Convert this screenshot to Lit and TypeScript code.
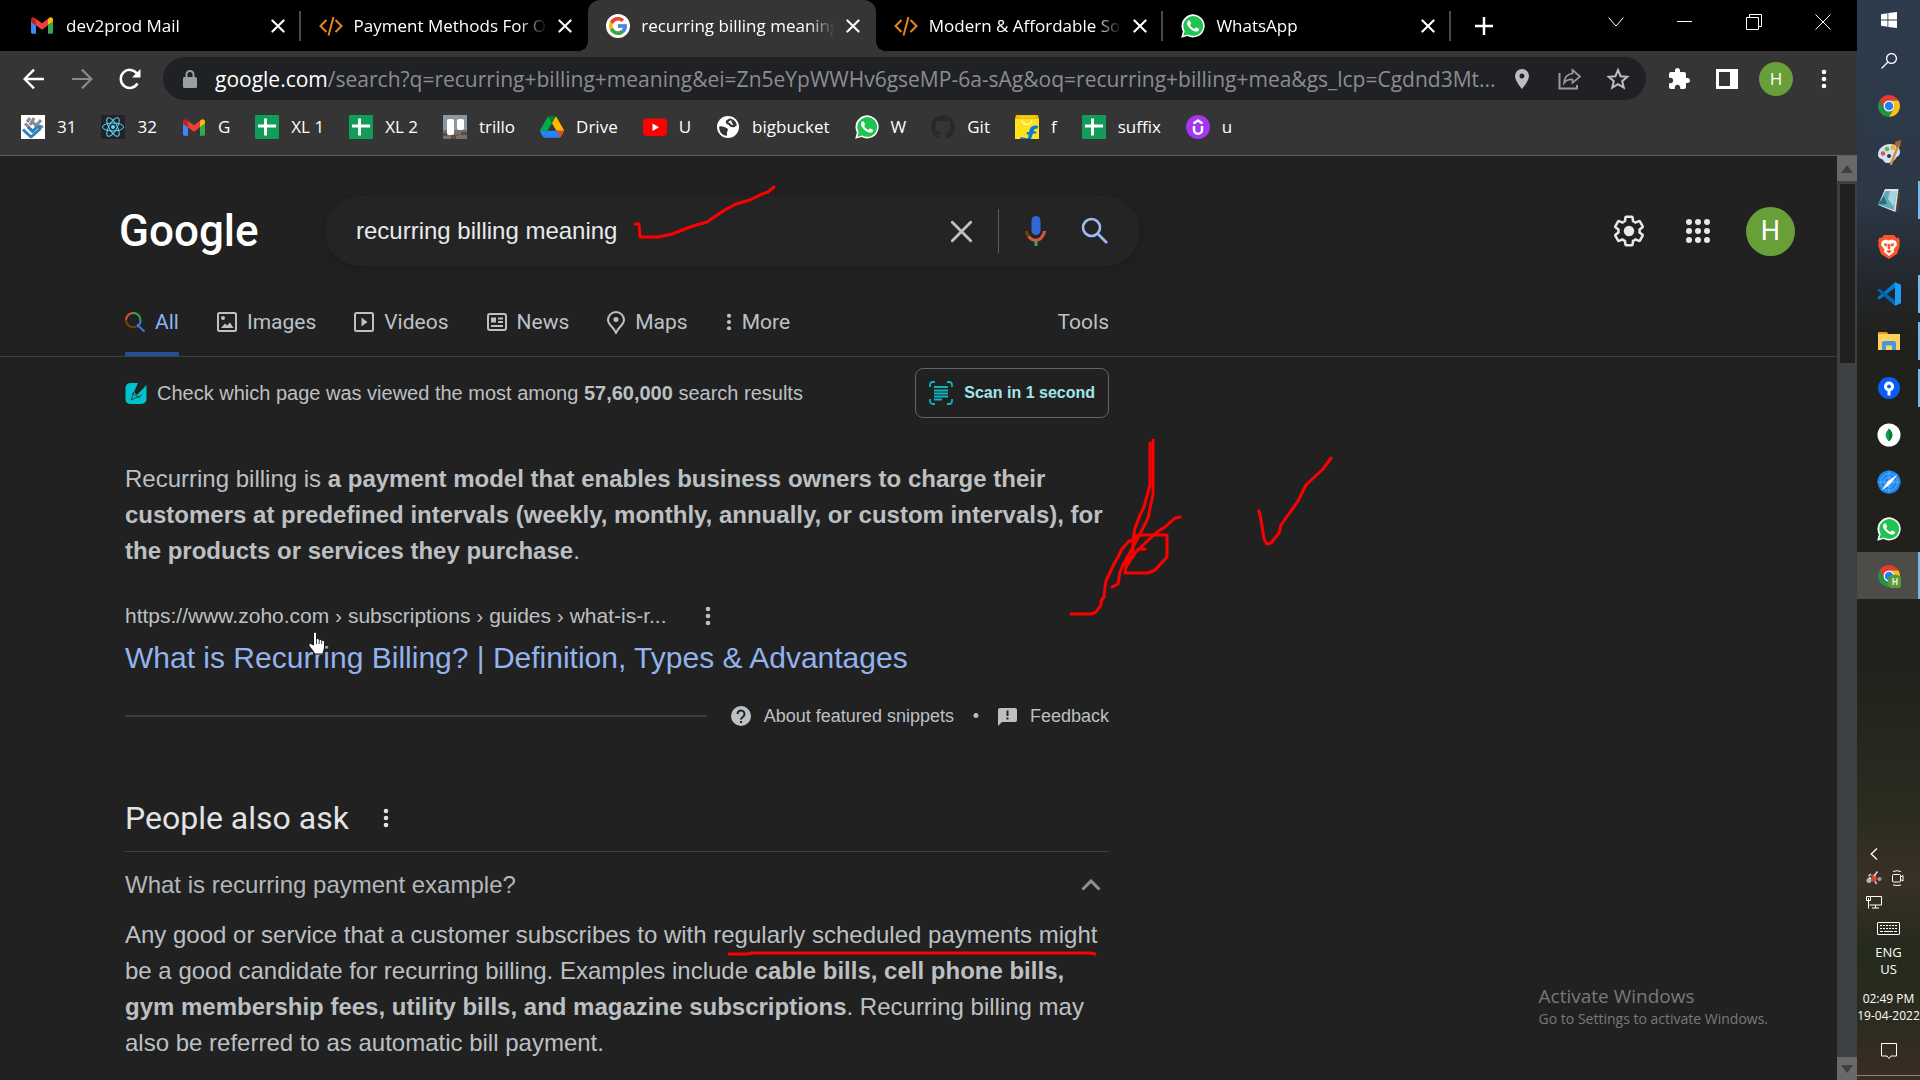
import { LitElement, html, svg, css, nothing, TemplateResult } from "lit";
import { customElement, state } from "lit/decorators.js";

type Art = TemplateResult;

const icon = (box: string, w: number, h: number, body: unknown): Art =>
  html`<svg viewBox=${box} width=${w} height=${h} aria-hidden="true">${body}</svg>`;

const gmail = () => icon("52 38 88 74", 22, 21, svg`
  <path fill="#4285f4" d="M58 108h14V74L52 59v43c0 3.32 2.69 6 6 6"/>
  <path fill="#34a853" d="M120 108h14c3.32 0 6-2.69 6-6V59l-20 15"/>
  <path fill="#fbbc04" d="M120 48v26l20-15v-8c0-7.42-8.47-11.65-14.4-7.2"/>
  <path fill="#ea4335" d="M72 74V48l24 18 24-18v26L96 92"/>
  <path fill="#c5221f" d="M52 51v8l20 15V48l-5.6-4.2c-5.94-4.45-14.4-.22-14.4 7.2"/>`);

const codeMark = () => icon("0 0 24 24", 24, 24, svg`
  <g fill="none" stroke="#e8871e" stroke-width="2"><path d="M7.500 6 1.500 12l6 6M16.500 6l6 6-6 6M14.500 3 9.500 21.500"/></g>`);

const googleG = () => icon("0 0 48 48", 24, 24, svg`
  <circle cx="24" cy="24" r="24" fill="#fff"/>
  <g transform="translate(2.400 2.400) scale(.9)">
  <path fill="#fbbc05" d="M43.611,20.083H42V20H24v8h11.303c-1.649,4.657-6.08,8-11.303,8c-6.627,0-12-5.373-12-12s5.373-12,12-12c3.059,0,5.842,1.154,7.961,3.039l5.657-5.657C34.046,6.053,29.268,4,24,4C12.955,4,4,12.955,4,24s8.955,20,20,20s20-8.955,20-20C44,22.659,43.862,21.35,43.611,20.083z"/>
  <path fill="#ea4335" d="M6.306,14.691l6.571,4.819C14.655,15.108,18.961,12,24,12c3.059,0,5.842,1.154,7.961,3.039l5.657-5.657C34.046,6.053,29.268,4,24,4C16.318,4,9.656,8.337,6.306,14.691z"/>
  <path fill="#34a853" d="M24,44c5.166,0,9.86-1.977,13.409-5.192l-6.19-5.238C29.211,35.091,26.715,36,24,36c-5.202,0-9.619-3.317-11.283-7.946l-6.522,5.025C9.505,39.556,16.227,44,24,44z"/>
  <path fill="#4285f4" d="M43.611,20.083H42V20H24v8h11.303c-0.792,2.237-2.231,4.166-4.087,5.571l6.19,5.238C36.971,39.205,44,34,44,24C44,22.659,43.862,21.35,43.611,20.083z"/></g>`);

const whatsapp = () => icon("0 0 24 24", 24, 24, svg`
  <path fill="#fff" d="M.2 23.8 1.900 17.500A11.600 11.600 0 1 1 6.500 22.100Z"/>
  <path fill="#20c352" d="M2.300 21.700 3.700 17A9.900 9.900 0 1 1 7.200 20.500Z"/>
  <path fill="#fff" d="M17.472 14.382c-.297-.149-1.758-.867-2.03-.967-.273-.099-.471-.148-.67.15-.197.297-.767.966-.94 1.164-.173.199-.347.223-.644.075-.297-.15-1.255-.463-2.39-1.475-.883-.788-1.48-1.761-1.653-2.059-.173-.297-.018-.458.13-.606.134-.133.298-.347.446-.52.149-.174.198-.298.298-.497.099-.198.05-.371-.025-.52-.075-.149-.669-1.612-.916-2.207-.242-.579-.487-.5-.669-.51-.173-.008-.371-.01-.57-.01-.198 0-.52.074-.792.372-.272.297-1.04 1.016-1.04 2.479 0 1.462 1.065 2.875 1.213 3.074.149.198 2.096 3.2 5.077 4.487.709.306 1.262.489 1.694.625.712.227 1.36.195 1.871.118.571-.085 1.758-.719 2.006-1.413.248-.694.248-1.289.173-1.413-.074-.124-.272-.198-.57-.347z"/>`);

const sheet = () => icon("0 0 24 24", 24, 24, svg`
  <rect width="24" height="24" rx="1" fill="#0f9d58"/><path fill="#fff" d="M9 3.500h3v17H9zM3 9.500h18v3H3z"/>`);

const handLogo = () => icon("0 0 24 24", 24, 24, svg`
  <rect width="24" height="24" fill="#fff"/>
  <path fill="none" stroke="#8a8c8f" stroke-width="3" d="M4 8.500 11 15.500M9 3l-3 4M9 10l4-7M14 12l6-7M11 7l8 6 3-2"/>
  <path fill="none" stroke="#2f7fb8" stroke-width="3" stroke-linejoin="round" d="M2 14.500 10 22 18.500 14.500V10M7 12l4.500 4.500 5-5"/>`);

const reactLogo = () => icon("0 0 24 24", 24, 24, svg`
  <rect width="24" height="24" rx="1" fill="#20232a"/>
  <g fill="none" stroke="#61dafb" stroke-width="1"><ellipse cx="12" cy="12" rx="10.500" ry="4"/>
  <ellipse cx="12" cy="12" rx="10.500" ry="4" transform="rotate(60 12 12)"/>
  <ellipse cx="12" cy="12" rx="10.500" ry="4" transform="rotate(120 12 12)"/></g><circle cx="12" cy="12" r="2" fill="#61dafb"/>`);

const trello = () => icon("0 0 24 24", 24, 24, svg`
  <rect width="24" height="24" fill="#8b97a1"/><rect y="15" width="24" height="9" fill="#74706d"/>
  <path fill="#5d4a44" d="M0 18h4v3H0zM8 20h5v4H8zM18 17h6v3h-6z"/><path fill="#a8433c" d="M13 19h3v2h-3z"/>
  <rect x="4" y="4" width="7" height="16" rx="2" fill="#fff"/><rect x="14" y="4" width="7" height="11" rx="2" fill="#fff"/>`);

const drive = () => icon("0 0 87.3 78", 24, 22, svg`
  <path fill="#2684fc" d="m6.600 66.850 3.850 6.650c.8 1.400 1.950 2.500 3.300 3.300l13.750-23.800h-27.500c0 1.550.4 3.100 1.200 4.500z"/>
  <path fill="#00ac47" d="m43.650 25-13.750-23.800c-1.350.8-2.500 1.900-3.300 3.300l-25.400 44a9.060 9.060 0 0 0 -1.200 4.500h27.500z"/>
  <path fill="#ea4335" d="m73.550 76.800c1.350-.8 2.500-1.900 3.300-3.300l1.600-2.750 7.650-13.250c.8-1.400 1.200-2.950 1.200-4.500h-27.502l5.852 11.500z"/>
  <path fill="#00832d" d="m43.650 25 13.750-23.800c-1.350-.8-2.900-1.200-4.500-1.200h-18.500c-1.600 0-3.150.45-4.500 1.200z"/>
  <path fill="#2684fc" d="m59.800 53h-32.300l-13.750 23.800c1.350.8 2.900 1.200 4.500 1.200h50.800c1.600 0 3.150-.45 4.500-1.200z"/>
  <path fill="#ffba00" d="m73.400 26.500-12.700-22c-.8-1.400-1.950-2.500-3.300-3.300l-13.750 23.800 16.150 28h27.450c0-1.550-.4-3.100-1.200-4.500z"/>`);

const youtube = () => icon("0 0 24 24", 24, 24, svg`
  <rect y="3.500" width="24" height="17.500" rx="4" fill="#f00"/><path fill="#fff" d="M9.500 8.500v7.500l6.500-3.800z"/>`);

const globe = () => icon("0 0 24 24", 24, 24, svg`
  <circle cx="12" cy="12" r="11" fill="#fff"/>
  <path fill="#353535" d="M3.200 11.500c2.500-.8 4.500.3 7 1.300 2 .8 2.200 2.800.9 4l-.2 4C5.800 20.500 2.900 16.500 3.200 11.500z"/>
  <path fill="none" stroke="#353535" stroke-width="2.300" stroke-linecap="round" d="M14 4.500c-1 1-3.500 1-3 3 .3 1.300 2.200.7 3 2.200.8 1.600 2.700 1.500 4.200 1.300"/>
  <path fill="#353535" d="M14.500 3.500c3.500.8 6 3.500 6.300 7.300l-2.300.4-2.500-3.200z"/>`);

const github = () => icon("0 0 24 24", 24, 24, svg`
  <path fill="#24292e" d="M12 .297c-6.63 0-12 5.373-12 12 0 5.303 3.438 9.800 8.205 11.385.6.113.82-.258.82-.577 0-.285-.01-1.040-.015-2.040-3.338.724-4.042-1.610-4.042-1.610C4.422 18.070 3.633 17.700 3.633 17.700c-1.087-.744.084-.729.084-.729 1.205.084 1.838 1.236 1.838 1.236 1.070 1.835 2.809 1.305 3.495.998.108-.776.417-1.305.76-1.605-2.665-.3-5.466-1.332-5.466-5.930 0-1.310.465-2.380 1.235-3.220-.135-.303-.54-1.523.105-3.176 0 0 1.005-.322 3.300 1.230.96-.267 1.980-.399 3-.405 1.020.006 2.040.138 3 .405 2.280-1.552 3.285-1.230 3.285-1.230.645 1.653.24 2.873.12 3.176.765.84 1.230 1.910 1.230 3.220 0 4.610-2.805 5.625-5.475 5.920.42.36.81 1.096.81 2.220 0 1.606-.015 2.896-.015 3.286 0 .315.21.69.825.57C20.565 22.092 24 17.592 24 12.297c0-6.627-5.373-12-12-12"/>`);

const flipkart = () => icon("0 0 24 24", 24, 24, svg`
  <path fill="#ffe11b" d="M0 4h24v20H0z"/><path fill="#f5b800" d="M1 0h22l1 4H0z"/><path fill="#ffe11b" d="M4 1.500h16v1H4z"/>
  <path fill="none" stroke="#fff6b0" stroke-width="1.500" d="M7 5c0 6 10 6 10 0"/>
  <path fill="#047bd5" d="M23 11c-5-1.500-8 1-8.600 4.500l-.2 1.500H12l-.5 2.500h2.200L13 23c-2.500.8-5-1.500-7.500-.5L5 24h11l2-5.500h3l.5-2h-2.800c.3-2.300 1.300-3.200 4-3z"/>`);

const udemy = () => icon("0 0 24 24", 24, 24, svg`
  <circle cx="12" cy="12" r="12" fill="#a435f0"/>
  <path fill="none" stroke="#fff" stroke-width="2.500" d="M8 11v4a4 3.800 0 0 0 8 0v-4M7.500 8.500 12 5.500l4.500 3"/>`);

const chromeLogo = (badge = false) => icon("0 0 48 48", 24, 24, svg`
  <path fill="#e33b2e" d="M4.950 13A22 22 0 0 1 43.050 13H24A11 11 0 0 0 14.470 29.500Z"/>
  <path fill="#229342" d="M4.950 13 14.470 29.500A11 11 0 0 0 33.530 29.500L24 46A22 22 0 0 1 4.950 13Z"/>
  <path fill="#fbc116" d="M43.050 13A22 22 0 0 1 24 46L33.530 29.500A11 11 0 0 0 24 13Z"/>
  <circle cx="24" cy="24" r="11" fill="#fff"/><circle cx="24" cy="24" r="8.500" fill="#2a7de9"/>
  ${badge ? svg`<circle cx="36" cy="36" r="15" fill="#5c9a36"/>
    <text x="36" y="42" text-anchor="middle" font-family="Roboto, sans-serif" font-size="17" font-weight="700" fill="#e9f3e1">H</text>` : nothing}`);

const paint = () => icon("0 0 26 26", 26, 26, svg`
  <path fill="#cfe3f2" d="M2 15C2 8 8 4 14 4c6 0 10 3 10 8 0 4-2.500 4-4 6-1.500 2.500-4 5-9 5-3 0-3-3-5.500-4C3.500 18.500 2 17 2 15z"/>
  <circle cx="7" cy="13.500" r="2.300" fill="#e0564b"/><circle cx="11" cy="9" r="2.300" fill="#67b546"/><circle cx="17" cy="7.500" r="2.500" fill="#f0b12c"/>
  <circle cx="13" cy="16" r="2" fill="#2c3744"/><path stroke="#d98a3a" stroke-width="2.400" stroke-linecap="round" d="M22 6 15 24"/>
  <path fill="#a5683a" d="m19 2 6-2-1 7-4 0z"/>`);

const notepad = () => icon("0 0 26 26", 26, 26, svg`
  <path fill="#4d4335" d="m21 4 3 1-1 18-3 2z"/><path fill="#dbe7ec" d="M9 2h13.500L19.500 25 2 18z"/>
  <path fill="#5fabbd" d="M9.500 4H21l-3 19L2 17.500z"/><path fill="#2f6c80" d="m8 9 3 8-9 .5z"/><path fill="#a8d5dd" d="M14 4h7l-3 16-6-8z"/>`);

const brave = () => icon("0 0 24 24", 24, 24, svg`
  <path fill="#fb542b" d="M7 0h10l2.500 3 2-.5L23 6l-.8 2c1 1 .5 3-.2 5l-2 6-8 5-8-5-2-6c-.7-2-1.200-4-.2-5L1 6l1.500-3.500 2 .5z"/>
  <path fill="#fff" d="m5 6 4.500-1.500 2.500 1 2.500-1L19 6l1 4-3.500 4.500.5 2.500-5 4-5-4 .5-2.500L4 10z"/>
  <path fill="#fb542b" d="m7 8 3.500 1-.5 2.500L7.500 11zM17 8l-3.500 1 .5 2.500 2.500-.5zM11 9h2l.5 4.500L12 14.500l-1.500-1zM9 16l3-1 3 1-3 2.500z"/>`);

const vscode = () => icon("0 0 24 24", 24, 24, svg`
  <path fill="#007acc" d="m.3 15.800 2 1.800L18 5.800V0z"/>
  <path fill="#0065a9" d="m.3 8.200 2-1.800L18 18.200V24z"/><path fill="#1f9cf0" d="M17.500 0 24 2.800v18.400L17.500 24c.5 0 .5-.4.500-1V1c0-.6 0-1-.5-1z"/>`);

const explorer = () => icon("0 0 24 24", 24, 24, svg`
  <path fill="#e29b0f" d="M1 3h9l1.500 2.500H1z"/><path fill="#ffd15c" d="M1 5h22v16H1z"/>
  <path fill="#3f9ae0" d="M5 13.500 6.500 12h11l1.500 1.500V21h-4v-4.500H9V21H5z"/>`);

const sourcetree = () => icon("0 0 24 24", 24, 24, svg`
  <circle cx="12" cy="12" r="11" fill="#0a5cf5"/><circle cx="12" cy="10.500" r="3.500" fill="none" stroke="#fff" stroke-width="3"/><path fill="#fff" d="M10.500 13h3v6.500h-3z"/>`);

const mongo = () => icon("0 0 24 24", 24, 24, svg`
  <circle cx="12" cy="12" r="11.500" fill="#fff"/><path fill="#10a14c" d="M12 5.500c4.500 4.500 4.500 8.500 0 13-4.500-4.500-4.500-8.500 0-13z"/><path fill="#0b7c3a" d="M12 5.500c4.500 4.500 4.500 8.500 0 13z"/>`);

const compass = () => icon("0 0 24 24", 24, 24, svg`
  <circle cx="12" cy="12" r="11.500" fill="#1c87f0"/><g fill="none" stroke="#6db5f8" stroke-width=".8"><circle cx="12" cy="12" r="8.500"/><circle cx="12" cy="12" r="5"/><path d="M12 .5v23M.5 12h23"/></g>
  <path fill="#fff" d="M20.500 4.500 13.500 14 4.500 20.500 11 11z"/>`);

const dots = (h = 20) => icon("0 0 6 20", 6, h, svg`
  <g fill="currentColor"><circle cx="3" cy="3" r="2.300"/><circle cx="3" cy="10" r="2.300"/><circle cx="3" cy="17" r="2.300"/></g>`);

const closeX = (s: number, w: number) => icon("0 0 20 20", s, s, svg`
  <path stroke="currentColor" stroke-width=${w} stroke-linecap="round" d="M2 2 18 18M18 2 2 18"/>`);

const lens = () => icon("0 0 28 28", 28, 28, svg`
  <g fill="none" stroke="currentColor" stroke-width="2.600"><circle cx="10.500" cy="10.500" r="8.500"/><path d="m17 17 9 9"/></g>`);

interface Tab { title: string; art: () => Art; active?: boolean; line?: boolean; }
const TABS: Tab[] = [
  { title: "dev2prod Mail", art: gmail, line: true },
  { title: "Payment Methods For Online", art: codeMark },
  { title: "recurring billing meaning", art: googleG, active: true },
  { title: "Modern & Affordable Software", art: codeMark, line: true },
  { title: "WhatsApp", art: whatsapp, line: true },
];

const BOOKMARKS: [string, () => Art][] = [
  ["31", handLogo], ["32", reactLogo], ["G", gmail], ["XL 1", sheet], ["XL 2", sheet],
  ["trillo", trello], ["Drive", drive], ["U", youtube], ["bigbucket", globe], ["W", whatsapp],
  ["Git", github], ["f", flipkart], ["suffix", sheet], ["u", udemy],
];

const APPS: [string, () => Art, boolean][] = [
  ["Chrome", chromeLogo, false], ["Paint", paint, false], ["Notepad", notepad, true],
  ["Brave", brave, false], ["Code", vscode, true], ["Explorer", explorer, true],
  ["Sourcetree", sourcetree, true], ["MongoDB", mongo, false], ["Navigator", compass, false],
  ["WhatsApp", whatsapp, false],
];

@customElement("browser-tabs")
class BrowserTabs extends LitElement {
  static styles = css`
    :host { display: flex; height: 51px; background: #000; color: #fff; font: 17px/24px "Open Sans", "Noto Sans", sans-serif; }
    svg { display: block; flex: none; }
    button { all: unset; display: flex; align-items: center; justify-content: center; box-sizing: border-box; cursor: pointer; }
    .tabs { display: flex; flex: 0 1 1451px; min-width: 0; padding-left: 13px; box-sizing: border-box; }
    .tab { position: relative; display: flex; flex: 1 1 0; min-width: 0; align-items: center; padding: 0 13px 0 18px; box-sizing: border-box; }
    .line { background: linear-gradient(#4a4a4a, #4a4a4a) right center / 2px 30px no-repeat; }
    .active { background: #353535; border-radius: 12px 12px 0 0; }
    .active::before, .active::after { content: ""; position: absolute; bottom: 0; width: 10px; height: 10px; }
    .active::before { left: -10px; background: radial-gradient(circle at 0 0, #000 10px, #353535 10px); }
    .active::after { right: -10px; background: radial-gradient(circle at 100% 0, #000 10px, #353535 10px); }
    .fav { width: 24px; flex: none; }
    .name { flex: 1; min-width: 0; justify-content: flex-start; margin: 0 8px 0 11px; overflow: hidden; white-space: nowrap;
      mask-image: linear-gradient(90deg, #000 calc(100% - 28px), transparent); }
    .close { width: 20px; height: 24px; }
    .plus { width: 66px; }
    .controls { display: flex; margin-left: auto; height: 43px; }
    .controls button { width: 69px; }
  `;
  render() {
    return html`
      <div class="tabs">
        ${TABS.map((t) => html`<div class="tab ${t.active ? "active" : t.line ? "line" : ""}">
          <span class="fav">${t.art()}</span>
          <button class="name">${t.title}</button>
          <button class="close" aria-label="Close tab">${closeX(14, 3)}</button>
        </div>`)}
      </div>
      <button class="plus" aria-label="New tab">${icon("0 0 18 18", 18, 18, svg`<path stroke="#fff" stroke-width="2.500" d="M9 0v18M0 9h18"/>`)}</button>
      <div class="controls">
        <button aria-label="Search tabs">${icon("0 0 16 10", 16, 10, svg`<path fill="none" stroke="#fff" d="m.5.5 7.500 8.500 7.500-8.500"/>`)}</button>
        <button aria-label="Minimize">${icon("0 0 15 15", 15, 15, svg`<path stroke="#fff" d="M0 7.500h15"/>`)}</button>
        <button aria-label="Restore">${icon("0 0 16 16", 16, 16, svg`<path fill="none" stroke="#fff" d="M.5 3.500h12v12H.5zM3.500 3.500V.5h12v12h-3"/>`)}</button>
        <button aria-label="Close">${icon("0 0 16 16", 16, 16, svg`<path stroke="#fff" d="m.5.5 15 15M15.500.5l-15 15"/>`)}</button>
      </div>`;
  }
}

@customElement("browser-toolbar")
class BrowserToolbar extends LitElement {
  static styles = css`
    :host { display: block; background: #353535; color: #fff; border-bottom: 1px solid #5f6062; font-family: "Open Sans", "Noto Sans", sans-serif; }
    svg { display: block; flex: none; }
    button { all: unset; display: flex; align-items: center; justify-content: center; cursor: pointer; }
    .bar { display: flex; align-items: center; height: 43px; padding: 6px 9px 0 10px; }
    .nav { width: 48px; height: 40px; }
    .dim { color: #8a8a8a; }
    .pill { display: flex; flex: 1; min-width: 0; align-items: center; align-self: stretch; margin: 0 9px; padding: 0 4px 0 20px; border-radius: 22px; background: #202124; font-size: 21px; }
    .host { margin-left: 18px; }
    .url { flex: 1; min-width: 0; padding: 0; border: 0; outline: 0; background: none; color: #8b8d90; font: inherit; text-overflow: ellipsis; }
    .pill button { width: 48px; height: 40px; color: #bdc1c6; }
    .ext { width: 48px; height: 40px; }
    .me { width: 34px; height: 34px; margin: 0 7px 0 8px; border-radius: 50%; background: #689f38; font-size: 17px; }
    .marks { display: flex; align-items: center; height: 54px; padding: 0 0 1px 21px; gap: 25px; }
    .mark { display: flex; align-items: center; gap: 12px; color: #fff; text-decoration: none; font-size: 17px; line-height: 24px; white-space: nowrap; }
    .pic { width: 24px; display: flex; justify-content: center; }
  `;
  render() {
    return html`
      <div class="bar">
        <button class="nav" aria-label="Back">${icon("0 0 20 20", 22, 22, svg`<path fill="none" stroke="#fff" stroke-width="2.200" d="M19 10H2M10 1.500 1.500 10l8.500 8.500"/>`)}</button>
        <button class="nav dim" aria-label="Forward">${icon("0 0 20 20", 22, 22, svg`<path fill="none" stroke="currentColor" stroke-width="2" d="M1 10h17M10 1.500l8.500 8.500-8.500 8.500"/>`)}</button>
        <button class="nav" aria-label="Reload">${icon("0 0 22 22", 22, 22, svg`<path fill="none" stroke="#fff" stroke-width="2.500" d="M18.500 15.500A9 9 0 1 1 18 5.500"/><path fill="#fff" d="M21.500 1v8.500H13z"/>`)}</button>
        <div class="pill">
          ${icon("0 0 14 18", 14, 18, svg`<rect y="7" width="14" height="11" rx="1.500" fill="#9aa0a6"/><path fill="none" stroke="#9aa0a6" stroke-width="2" d="M3.500 8V4.500a3.500 3.500 0 0 1 7 0V8"/>`)}
          <label class="host" for="url">google.com</label>
          <input class="url" id="url" .value=${"/search?q=recurring+billing+meaning&ei=Zn5eYpWWHv6gseMP-6a-sAg&oq=recurring+billing+mea&gs_lcp=Cgdnd3Mt..."} />
          <button aria-label="Location">${icon("0 0 14 20", 14, 20, svg`<path fill="#bdbdbd" fill-rule="evenodd" d="M7 0a7 7 0 0 1 7 7c0 5-7 13-7 13S0 12 0 7a7 7 0 0 1 7-7zm0 4.500a2.500 2.500 0 1 0 0 5 2.500 2.500 0 0 0 0-5z"/>`)}</button>
          <button aria-label="Share">${icon("0 0 24 22", 24, 22, svg`<g fill="none" stroke="#9a9a9a" stroke-width="2"><path d="M1.500 5v15.500H19V17"/><path stroke-width="1.700" d="M14.500 2 22 8.500 14.500 15v-3.500c-4-.3-6.500 1-8.500 3.500 .5-5.500 3.500-9 8.500-9.500z"/></g>`)}</button>
          <button aria-label="Bookmark">${icon("0 0 24 24", 24, 24, svg`<path fill="none" stroke="#bdbdbd" stroke-width="2" d="m12 3 2.600 6.200 6.700.6-5.100 4.400 1.600 6.500L12 17.200l-5.800 3.500 1.600-6.500-5.100-4.400 6.700-.6z"/>`)}</button>
        </div>
        <button class="ext" aria-label="Extensions">${icon("0 0 24 24", 24, 24, svg`<path fill="#fff" d="M20.500 11H19V7c0-1.100-.9-2-2-2h-4V3.500C13 2.120 11.880 1 10.500 1S8 2.120 8 3.500V5H4c-1.100 0-1.990.9-1.990 2v3.800H3.500c1.490 0 2.700 1.210 2.700 2.700s-1.210 2.700-2.700 2.700H2V20c0 1.100.9 2 2 2h3.800v-1.500c0-1.490 1.210-2.700 2.700-2.700 1.490 0 2.700 1.210 2.700 2.700V22H17c1.100 0 2-.9 2-2v-4h1.500c1.380 0 2.500-1.120 2.500-2.500S21.880 11 20.500 11z"/>`)}</button>
        <button class="ext" aria-label="Side panel">${icon("0 0 22 22", 22, 22, svg`<path fill="#fff" fill-rule="evenodd" d="M0 1h22v20H0zM3 4v14h11V4z"/>`)}</button>
        <button class="me" aria-label="Profile">H</button>
        <button class="ext" aria-label="Menu">${dots(20)}</button>
      </div>
      <nav class="marks">
        ${BOOKMARKS.map(([name, art]) => html`<a class="mark" href="#"><span class="pic">${art()}</span>${name}</a>`)}
      </nav>`;
  }
}

@customElement("search-page")
class SearchPage extends LitElement {
  @state() open = true;
  static styles = css`
    :host { display: flex; flex: 1; background: #212121; color: #bdc0c3; font-family: "Liberation Sans", Arial, sans-serif; }
    svg { display: block; flex: none; }
    button { all: unset; display: flex; align-items: center; justify-content: center; box-sizing: border-box; cursor: pointer; }
    a { color: inherit; text-decoration: none; }
    h2, h3, p { margin: 0; font-weight: 400; }
    .page { flex: 1; min-width: 0; display: flex; flex-direction: column; }
    .head { display: flex; align-items: center; padding: 40px 42px 0 119px; }
    .logo { width: 206px; color: #fff; font: 500 44px/70px Roboto, "Liberation Sans", sans-serif; }
    .box { display: flex; flex: 0 1 815px; min-width: 0; box-sizing: border-box; align-items: center; height: 70px; padding: 0 23px 0 31px; border-radius: 35px; background: #242424; box-shadow: 0 2px 8px #1b1b1b; }
    .q { flex: 1; min-width: 0; height: 36px; padding: 0; border: 0; outline: 0; background: none; color: #e8eaed; font: 24px/36px "Liberation Sans", Arial, sans-serif; }
    .clear { width: 74px; height: 44px; border-right: 1px solid #5c5f62; color: #bdc1c6; }
    .mic { width: 74px; height: 44px; }
    .go { width: 44px; height: 44px; color: #9dbbf3; }
    .account { display: flex; align-items: center; margin-left: auto; gap: 36px; color: #e8e8e8; }
    .apps { padding-left: 4px; }
    .me { width: 49px; height: 49px; border-radius: 50%; background: #689f38; color: #fff; font: 27px/49px Roboto, sans-serif; }
    .filters { display: flex; padding: 32px 0 0 125px; border-bottom: 1px solid #3c3e40; font: 21px/48px Roboto, "Liberation Sans", sans-serif; color: #bdc1c6; }
    .set { display: flex; flex: 0 1 984px; gap: 38px; }
    .filter { display: flex; align-items: center; gap: 10px; padding-bottom: 6px; border-bottom: 4px solid transparent; }
    .on { color: #8ab4f8; border-color: #264f94; }
    .tools { margin-left: auto; }
    .column { max-width: 984px; margin-left: 125px; display: flex; flex-direction: column; }
    .check { display: flex; align-items: center; gap: 10px; margin-top: 11px; font-size: 20px; line-height: 28px; white-space: nowrap; }
    .scan { gap: 11px; height: 50px; margin-left: auto; padding: 0 13px; border: 1px solid #5f6368; border-radius: 8px; color: #a2e6ea; font-size: 16px; font-weight: 700; }
    .text { font-size: 24px; line-height: 36px; }
    .snippet { margin-top: 43px; }
    .cite { display: flex; align-items: center; gap: 38px; margin-top: 33px; font-size: 21px; line-height: 28px; }
    .title { margin-top: 8px; font-size: 30px; line-height: 40px; color: #93b3ee; }
    .about { display: flex; align-items: center; margin-top: 24px; height: 28px; font-size: 18px; line-height: 28px; }
    .rule { flex: 1; height: 2px; margin-right: 24px; background: #3c3e40; }
    .note { display: flex; align-items: center; gap: 13px; }
    .sep { width: 44px; text-align: center; }
    .ask { display: flex; align-items: center; gap: 34px; margin-top: 68px; padding-bottom: 13px; border-bottom: 1px solid #3c3e40; color: #e2e3e5; }
    .ask h2 { font: 32px/40px Roboto, "Liberation Sans", sans-serif; }
    .question { justify-content: space-between; padding: 15px 8px 14px 0; color: #b4b7ba; }
    .scroll { display: flex; flex-direction: column; width: 20px; background: #3c4144; color: #3c4144; }
    .step { height: 25px; background: #696969; }
    .low { margin-top: auto; height: 23px; }
    .thumb { height: 179px; margin: 3px 2px 0 3px; background: #202020; }
  `;
  render() {
    const frame = svg`<rect x="1" y="1" width="18" height="18" rx="1.500" fill="none" stroke="currentColor" stroke-width="2"/>`;
    return html`
      <main class="page">
        <header class="head">
          <a class="logo" href="#">Google</a>
          <div class="box">
            <input class="q" aria-label="Search" .value=${"recurring billing meaning"} />
            <button class="clear" aria-label="Clear">${closeX(23, 2.5)}</button>
            <button class="mic" aria-label="Voice search">${icon("0 0 22 30", 22, 30, svg`
              <rect x="6.500" width="9" height="19" rx="4.500" fill="#3367d6"/><path fill="none" stroke="#d95442" stroke-width="3" d="M3.500 20.500c4 5 11 5 14-.5 1.500-2 2-3.500 2-5"/>
              <path fill="none" stroke="#6b4700" stroke-width="3" d="M1.500 15c0 2 .5 3.500 2 5.500"/><path fill="#34a853" d="M9.500 25h3v5h-3z"/>`)}</button>
            <button class="go" aria-label="Search">${lens()}</button>
          </div>
          <div class="account">
            <button aria-label="Settings">${icon("0 0 24 24", 34, 34, svg`
              <path fill="none" stroke="currentColor" stroke-width="1.800" d="M19.430 12.980c.04-.32.07-.64.07-.98 0-.34-.03-.66-.07-.98l2.110-1.650c.19-.15.24-.42.12-.64l-2-3.460c-.09-.16-.26-.25-.44-.25-.06 0-.12.01-.17.03l-2.490 1c-.52-.4-1.080-.73-1.690-.98l-.38-2.650C14.460 2.180 14.250 2 14 2h-4c-.25 0-.46.18-.49.42l-.38 2.650c-.61.25-1.170.59-1.690.98l-2.490-1c-.06-.02-.12-.03-.18-.03-.17 0-.34.09-.43.25l-2 3.460c-.13.22-.07.49.12.64l2.110 1.650c-.04.32-.07.65-.07.98 0 .33.03.66.07.98l-2.110 1.650c-.19.15-.24.42-.12.64l2 3.460c.09.16.26.25.44.25.06 0 .12-.01.17-.03l2.490-1c.52.4 1.080.73 1.690.98l.38 2.650c.03.24.24.42.49.42h4c.25 0 .46-.18.49-.42l.38-2.650c.61-.25 1.170-.59 1.690-.98l2.490 1c.06.02.12.03.18.03.17 0 .34-.09.43-.25l2-3.460c.12-.22.07-.49-.12-.64z"/>
              <circle cx="12" cy="12" r="3.700" fill="currentColor"/>`)}</button>
            <button class="apps" aria-label="Apps">${icon("0 0 24 24", 24, 24, svg`<g fill="currentColor">${[3, 12, 21].map((y) => [3, 12, 21].map((x) => svg`<circle cx=${x} cy=${y} r="3"/>`))}</g>`)}</button>
            <button class="me" aria-label="Account">H</button>
          </div>
        </header>

        <nav class="filters">
          <div class="set">
            <a class="filter on" href="#">${icon("0 0 20 20", 20, 20, svg`<g fill="none" stroke-width="2"><path stroke="#d95442" d="M1 8.500a7 7.500 0 0 1 7.500-7.500"/><path stroke="#34a853" d="M8 1a7 7.500 0 0 1 7.500 8"/><path stroke="#3f78df" d="M15.500 8.500c0 3-1.500 5-3.500 6m0-2 7.500 7.200"/><path stroke="#6b4700" d="M1 8c0 5 4.500 8.500 10.500 7"/></g>`)}All</a>
            <a class="filter" href="#">${icon("0 0 20 20", 20, 20, svg`${frame}<circle cx="6" cy="6" r="2" fill="currentColor"/><path fill="currentColor" d="m4 16 4-4.500 2 2 3-3 3.500 5.500z"/>`)}Images</a>
            <a class="filter" href="#">${icon("0 0 20 20", 20, 20, svg`${frame}<path fill="currentColor" d="M7.500 5.500v9l6-4.500z"/>`)}Videos</a>
            <a class="filter" href="#">${icon("0 0 20 20", 20, 20, svg`<rect x="1" y="2" width="18" height="16" rx="2" fill="none" stroke="currentColor" stroke-width="2"/><path fill="currentColor" d="M4 5.500h5v5H4zM11 5.500h5v2h-5zM11 9h5v2h-5zM4 13h12v2H4z"/>`)}News</a>
            <a class="filter" href="#">${icon("0 0 18 23", 18, 23, svg`<path fill="none" stroke="currentColor" stroke-width="2" d="M9 1a8 8 0 0 1 8 8c0 5-6 7-8 13C7 16 1 14 1 9a8 8 0 0 1 8-8z"/><circle cx="9" cy="8.500" r="2.500" fill="currentColor"/>`)}Maps</a>
            <a class="filter" href="#">${dots(18)}More</a>
            <a class="filter tools" href="#">Tools</a>
          </div>
        </nav>

        <div class="column">
          <div class="check">
            ${icon("0 0 22 22", 22, 22, svg`<path fill="#00c4cc" d="M6 1h7L9 10l3 3L21.500 3v14a5 5 0 0 1-5 5H5a5 5 0 0 1-4.500-5V6A5 5 0 0 1 6 1z"/><path fill="none" stroke="#1d3f42" d="m9 10-3 8 11-5M7 11l8 5"/>`)}
            <span>Check which page was viewed the most among <b>57,60,000</b> search results</span>
            <button class="scan">${icon("0 0 24 24", 24, 24, svg`<g fill="none" stroke="#0cb5bd" stroke-width="1.800"><path d="M1 6V4a3 3 0 0 1 3-3h2M18 1h2a3 3 0 0 1 3 3v2M23 18v2a3 3 0 0 1-3 3h-2M6 23H4a3 3 0 0 1-3-3v-2M5 6h14M5 9.500h14M5 12.500h14M5 15.500h14M5 18.500h8"/></g>`)}Scan in 1 second</button>
          </div>

          <p class="text snippet">Recurring billing is <b>a payment model that enables business owners to charge their customers at predefined intervals (weekly, monthly, annually, or custom intervals), for the products or services they purchase</b>.</p>
          <div class="cite"><a href="#">https://www.zoho.com › subscriptions › guides › what-is-r...</a><button aria-label="About this result">${dots(20)}</button></div>
          <h3 class="title"><a href="#">What is Recurring Billing? | Definition, Types &amp; Advantages</a></h3>
          <div class="about">
            <span class="rule"></span>
            <a class="note" href="#">${icon("0 0 20 20", 20, 20, svg`<circle cx="10" cy="10" r="10" fill="currentColor"/><path fill="none" stroke="#212121" stroke-width="2" d="M6.500 8a3.500 3.500 0 1 1 5.500 2.800c-1.300.9-2 1.400-2 2.700"/><path fill="#212121" d="M9 15h2v2H9z"/>`)}About featured snippets</a>
            <span class="sep">•</span>
            <a class="note" href="#">${icon("0 0 19 19", 19, 19, svg`<path fill="currentColor" d="M2 1h15a2 2 0 0 1 2 2v10a2 2 0 0 1-2 2H4l-4 4V3a2 2 0 0 1 2-2z"/><path fill="#212121" d="M8.500 3.500h2v5.500h-2zM8.500 10.500h2v2h-2z"/>`)}Feedback</a>
          </div>

          <div class="ask"><h2>People also ask</h2><button aria-label="More options">${dots(20)}</button></div>
          <button class="text question" aria-expanded=${this.open} @click=${() => (this.open = !this.open)}>
            What is recurring payment example?
            ${icon("0 0 20 12", 20, 12, svg`<path fill="none" stroke="#8d9094" stroke-width="3" d="m1.500 10.500 8.500-8.500 8.500 8.500"/>`)}
          </button>
          ${this.open ? html`<p class="text">Any good or service that a customer subscribes to with regularly scheduled payments might be a good candidate for recurring billing. Examples include <b>cable bills, cell phone bills, gym membership fees, utility bills, and magazine subscriptions</b>. Recurring billing may also be referred to as automatic bill payment.</p>` : nothing}
        </div>
      </main>
      <div class="scroll">
        <button class="step" aria-label="Scroll up">${icon("0 0 12 8", 12, 8, svg`<path fill="currentColor" d="M0 8 6 0l6 8z"/>`)}</button>
        <div class="thumb"></div>
        <button class="step low" aria-label="Scroll down">${icon("0 0 12 8", 12, 8, svg`<path fill="currentColor" d="m0 0 6 8 6-8z"/>`)}</button>
      </div>`;
  }
}

@customElement("task-bar")
class TaskBar extends LitElement {
  static styles = css`
    :host { display: flex; flex-direction: column; min-width: 0; color: #fff; font: 13px/17px "Open Sans", "Noto Sans", sans-serif; text-align: center;
      background: linear-gradient(#2d3b4d 0, #2c3846 200px, #23252a 290px, #20211c 340px, #20201c 640px, #2c2c20 820px, #3a3026 880px, #252a1c 950px, #2b2b1e 1010px, #3a2c24 1080px); }
    svg { display: block; flex: none; }
    button { all: unset; display: flex; align-items: center; justify-content: center; box-sizing: border-box; cursor: pointer; }
    .start { height: 40px; }
    .find { height: 42px; }
    .app { height: 47px; }
    .open { background: linear-gradient(#76b9ed, #76b9ed) right center / 2px 38px no-repeat; }
    .current { background: linear-gradient(#76b9ed, #76b9ed) right center / 2px 47px no-repeat, #4d4c49; }
    .tray { margin-top: auto; display: grid; grid-template-columns: 24px 24px; grid-auto-rows: 24px; padding: 0 0 2px 5px; }
    .keys { height: 28px; padding-bottom: 4px; }
    .lang { margin-bottom: 12px; }
    .clock { font-size: 12px; white-space: nowrap; margin-bottom: 3px; }
    .center { height: 48px; }
    .desk { height: 5px; border-top: 1px solid #8a8378; }
  `;
  render() {
    return html`
      <button class="start" aria-label="Start">${icon("0 0 16 16", 16, 16, svg`<path fill="#fff" d="m0 2.200 6.500-1v6.300H0zM7.300 1.100 16 0v7.500H7.300zM0 8.500h6.500v6.300l-6.500-1zM7.300 8.500H16V16l-8.700-1.100z"/>`)}</button>
      <button class="find" aria-label="Search">${icon("0 0 16 16", 16, 16, svg`<g fill="none" stroke="#fff" stroke-width="1.300"><circle cx="10.500" cy="5.500" r="4.900"/><path d="M7 9 .5 15.500"/></g>`)}</button>
      ${APPS.map(([name, art, open]) => html`<button class="app ${open ? "open" : ""}" aria-label=${name}>${art()}</button>`)}
      <button class="app current" aria-label="Chrome profile">${chromeLogo(true)}</button>
      <div class="tray">
        <button aria-label="Hidden icons">${icon("0 0 8 12", 8, 12, svg`<path fill="none" stroke="#fff" stroke-width="1.300" d="M7 .5 1.200 6 7 11.500"/>`)}</button><span></span>
        <button aria-label="Input">${icon("0 0 16 14", 16, 14, svg`<path fill="#d5452f" d="m5 4 5-1 1 6-5 2z"/><circle cx="3" cy="9.500" r="2.500" fill="#b9b2ac"/><circle cx="13.500" cy="8" r="2" fill="#a39b95"/><path stroke="#ddd" stroke-width="1.500" d="M8 5 11.500.5M3 6l2 2M9 10l1.500 3M2.500 5 5 3"/>`)}</button>
        <button aria-label="Camera">${icon("0 0 14 16", 14, 16, svg`<g fill="none" stroke="#fff"><rect x="1.500" y="4.500" width="8" height="7.500" rx="1"/><path d="m9.500 7 2.500-1.500v5.500l-2.500-1.500M2 1.500Q6 .0 10 1.500M2 15q4 1 8 0"/></g>`)}</button>
        <button aria-label="Network">${icon("0 0 16 14", 16, 14, svg`<path fill="none" stroke="#fff" d="M4.500 1.500h11v8.500H3.500M.5 1.500h4v4h-4zM2.500 3v10.500M9.500 10v3M6 13h7"/>`)}</button>
      </div>
      <button class="keys" aria-label="Keyboard">${icon("0 0 23 13", 23, 13, svg`<rect x=".5" y=".5" width="22" height="12" rx=".5" fill="none" stroke="#fff"/><path stroke="#fff" stroke-dasharray="2 1" d="M3 3.500h17M3 6.500h17"/><path stroke="#fff" d="M3 9.500h3M7 9.500h9M17 9.500h3"/>`)}</button>
      <div class="lang">ENG<br />US</div>
      <div class="clock">02:49 PM<br />19-04-2022</div>
      <button class="center" aria-label="Notifications">${icon("0 0 16 16", 16, 16, svg`<path fill="none" stroke="#fff" d="M.5.5h15v12.500h-5.500L8 15.500 6 13H.5z"/>`)}</button>
      <button class="desk" aria-label="Show desktop"></button>`;
  }
}

@customElement("app-root")
class AppRoot extends LitElement {
  static styles = css`
    :host { position: relative; display: grid; grid-template-columns: minmax(0, 1fr) 63px; min-height: 100vh; overflow: hidden; background: #212121; }
    .window { display: flex; flex-direction: column; min-width: 0; }
    .ink { position: absolute; left: 0; top: 0; pointer-events: none; }
    .pointer { position: absolute; left: 308px; top: 631px; pointer-events: none; }
    .activate { position: absolute; right: 152px; bottom: 51px; color: #797979; font: 14px/20px "Open Sans", "Noto Sans", sans-serif; pointer-events: none; }
    .activate strong { display: block; font-size: 19px; line-height: 26px; font-weight: 400; }
  `;
  render() {
    return html`
      <div class="window">
        <browser-tabs></browser-tabs>
        <browser-toolbar></browser-toolbar>
        <search-page></search-page>
      </div>
      <task-bar></task-bar>
      <div class="activate"><strong>Activate Windows</strong>Go to Settings to activate Windows.</div>
      <svg class="pointer" viewBox="0 0 18 24" width="18" height="24" aria-hidden="true">
        <path fill="#fff" stroke="#111" stroke-width="1" d="M5.500 14V2.500a1.500 1.500 0 0 1 3 0V8c1-.8 2.500-.5 2.700.8 1-.7 2.300-.3 2.500.8 1.300-.6 2.800 0 2.800 1.500V16c0 3-1.500 4-1.500 7H6.500C6 20 2 17 1 14.500c-.5-1.500 1.500-2.500 2.500-1.500z"/>
        <path stroke="#111" stroke-width=".8" d="M8.500 8v5M11.200 8.800V13M13.700 9.600V13"/>
      </svg>
      <svg class="ink" viewBox="0 0 1920 1080" width="1920" height="1080" aria-hidden="true">
        <g fill="none" stroke="#f00" stroke-width="3" stroke-linecap="round" stroke-linejoin="round">
          <path d="M635 224h4l1 13h18l14-3 21-8 14-4 16-11 13-7 14-4 12-6 6-2 6-5"/>
          <path d="M1071 614h20l5-2 5-7v-4l3-4 1-10 1-6 8-17 4-7 4-8 7-8 4-1 2-12 5-13 4-8 6-22V443"/>
          <path d="M1153 440v54l-5 24-8 16-7 13-10 18"/>
          <path d="M1125 573h23l7-3 12-13v-22h-29l-5 5v17M1125 573l1-6 9-14M1138 549h7"/>
          <path d="M1112 587l6-3 2-12 3-7 17-17 17-16 8-5 10-9 5-1"/>
          <path d="M1259 511l2 9 1 6 2 13 3 5 4-1 8-10 2-8 17-24 8-16 17-16 8-11"/>
          <path d="M729 954h18l5-1h339l4 1"/>
        </g>
      </svg>`;
  }
}
